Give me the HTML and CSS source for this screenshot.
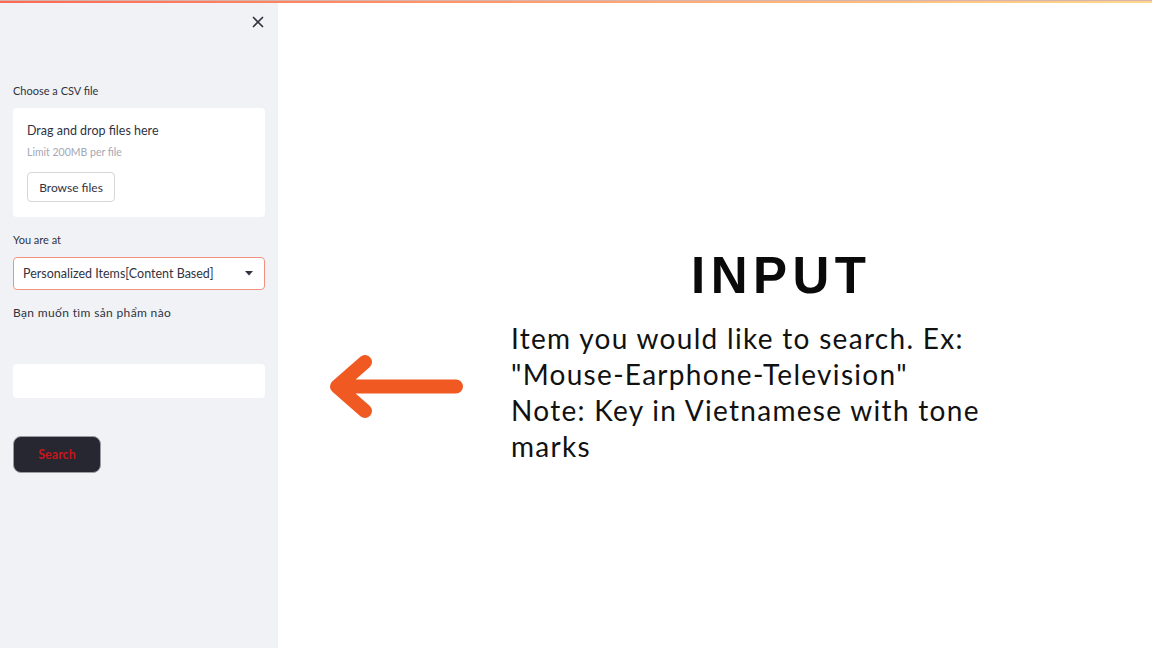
FILE: index.html
```html
<!DOCTYPE html>
<html lang="en">
<head>
<meta charset="utf-8">
<title>Recommender</title>
<link rel="stylesheet" href="styles.css">
</head>
<body>
<div class="decoration"></div>
<div class="app">
  <aside class="sidebar">
    <div class="sidebar-head">
      <svg class="close" width="12" height="12" viewBox="0 0 12 12"><path d="M1.5 1.5 L10.5 10.5 M10.5 1.5 L1.5 10.5" stroke="#31333f" stroke-width="1.7" stroke-linecap="round"/></svg>
    </div>
    <div class="label label-first">Choose a CSV file</div>
    <div class="dropzone">
      <div class="dz-title">Drag and drop files here</div>
      <div class="dz-limit">Limit 200MB per file</div>
      <div class="browse">Browse files</div>
    </div>
    <div class="label label-gap">You are at</div>
    <div class="select">
      <span>Personalized Items[Content Based]</span>
      <svg class="caret" width="8" height="5" viewBox="0 0 8 5"><path d="M0 0 H8 L4 4.5 Z" fill="#31333f"/></svg>
    </div>
    <div class="label label-gap label-vi">Bạn muốn tìm sản phẩm nào</div>
    <div class="textinput"></div>
    <div class="search-btn">Search</div>
  </aside>
  <main class="main">
    <div class="title">INPUT</div>
    <div class="row">
      <svg class="arrow" width="142" height="70" viewBox="0 0 142 70"><path d="M130 32.5 H12 M39 8 L11 32.5 L39 57" fill="none" stroke="#f05a22" stroke-width="14" stroke-linecap="round" stroke-linejoin="round"/></svg>
      <div class="desc">Item you would like to search. Ex:<br>"Mouse-Earphone-Television"<br>Note: Key in Vietnamese with tone<br>marks</div>
    </div>
  </main>
</div>
</body>
</html>
```

FILE: styles.css
```css
* { box-sizing: border-box; }
html, body { margin: 0; padding: 0; }
body {
  width: 1152px;
  height: 648px;
  overflow: hidden;
  background: #ffffff;
  font-family: "Lato", "Noto Sans", sans-serif;
  color: #31333f;
  position: relative;
}
.decoration {
  position: absolute;
  top: 0;
  left: 0;
  right: 0;
  height: 3px;
  background: linear-gradient(90deg, #ff6a55, #ffd88a);
  border-top: 1px solid #d8b4ae;
  z-index: 2;
}
.app {
  display: flex;
  height: 648px;
}
.sidebar {
  width: 278px;
  flex: none;
  background: #f0f2f6;
  padding: 0 13px;
  display: flex;
  flex-direction: column;
}
.sidebar-head {
  height: 44px;
  display: flex;
  justify-content: flex-end;
  align-items: flex-start;
  padding-right: 1px;
  padding-top: 16px;
}
.close { display: block; }
.label {
  font-size: 11px;
  line-height: 16px;
  color: #31333f;
}
.label-vi { font-size: 12px; letter-spacing: 0.35px; }
.label-first { margin-top: 39px; margin-bottom: 9px; }
.label-gap { margin-top: 15px; margin-bottom: 9px; }
.dropzone {
  background: #ffffff;
  border-radius: 4px;
  height: 109px;
  padding: 15px 14px 0;
}
.dz-title {
  font-size: 12.5px;
  line-height: 16px;
  color: #31333f;
}
.dz-limit {
  font-size: 10.5px;
  line-height: 14px;
  margin-top: 6px;
  color: #a3a8b4;
}
.browse {
  margin-top: 13px;
  width: 88px;
  height: 30px;
  border: 1px solid #d6d6d9;
  border-radius: 4px;
  background: #fff;
  font-size: 12px;
  display: flex;
  align-items: center;
  justify-content: center;
  color: #31333f;
}
.select {
  height: 33px;
  background: #fff;
  border: 1px solid #f2927e;
  border-radius: 4px;
  display: flex;
  align-items: center;
  justify-content: space-between;
  padding: 0 11px 0 9px;
  font-size: 12.5px;
  color: #31333f;
}
.caret { display: block; }
.textinput {
  margin-top: 34px;
  height: 34px;
  background: #fff;
  border-radius: 4px;
}
.search-btn {
  margin-top: 38px;
  width: 88px;
  height: 37px;
  background: #262730;
  border: 1px solid #9a9ba3;
  border-radius: 8px;
  color: #c4161c;
  font-size: 12.5px;
  font-weight: 700;
  display: flex;
  align-items: center;
  justify-content: center;
}
.main {
  flex: 1;
  display: flex;
  flex-direction: column;
  padding-top: 246px;
}
.title {
  margin-left: 413px;
  font-family: "Liberation Sans", Arial, sans-serif;
  font-weight: 700;
  font-size: 51px;
  line-height: 60px;
  letter-spacing: 5.5px;
  color: #0a0a0a;
}
.row {
  display: flex;
  align-items: flex-start;
  margin-top: 14px;
  padding-left: 48px;
}
.arrow {
  display: block;
  margin-top: 34px;
  flex: none;
}
.desc {
  margin-left: 43px;
  font-family: "Lato", sans-serif;
  font-size: 28px;
  line-height: 36px;
  letter-spacing: 1.3px;
  color: #111111;
}
```
